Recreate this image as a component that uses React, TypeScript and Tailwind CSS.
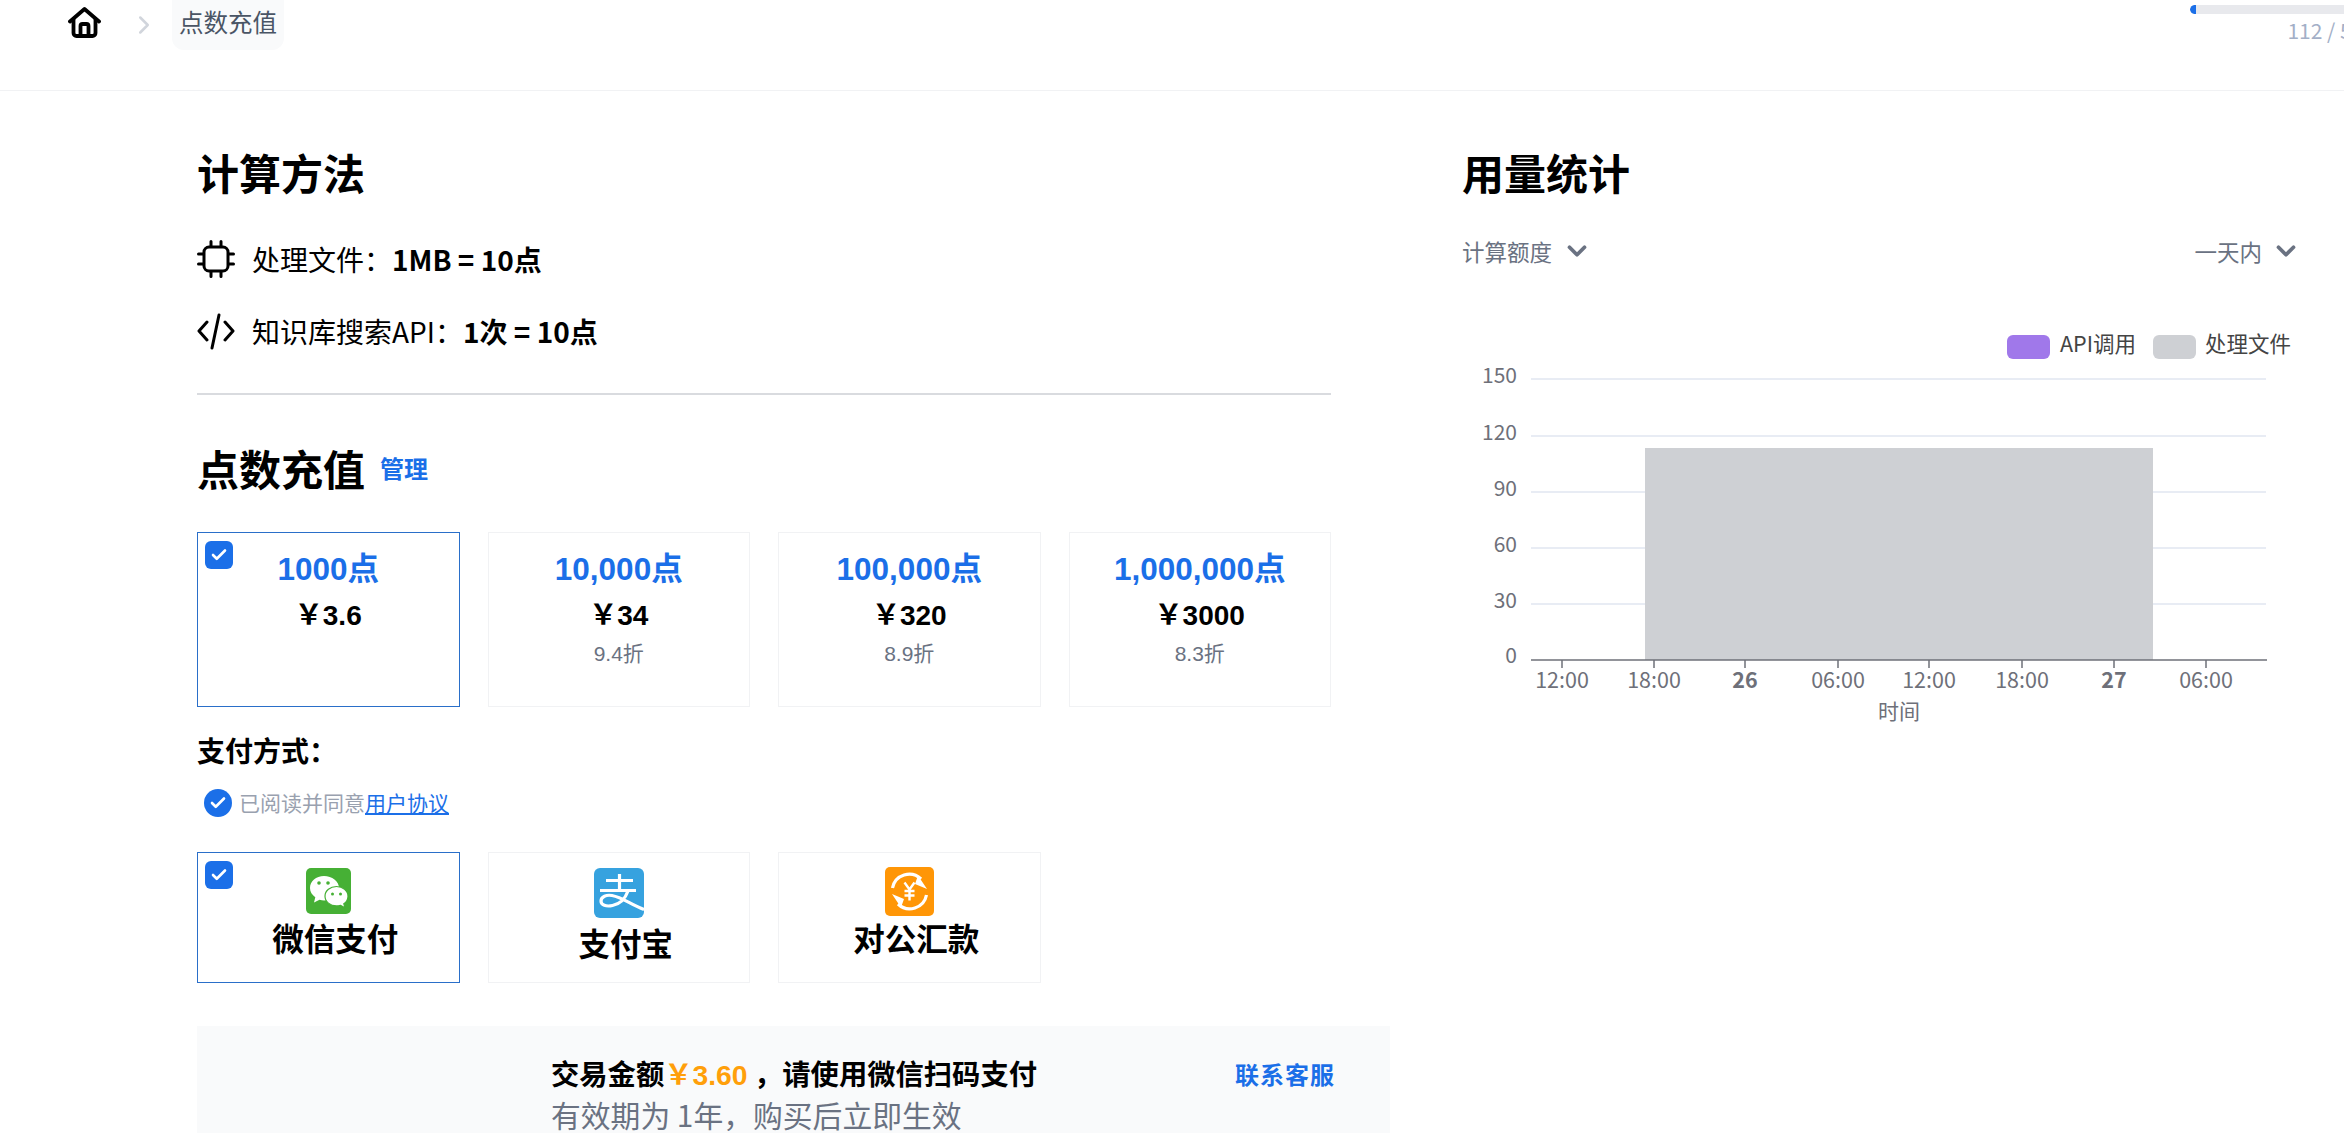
import { ChevronDown, ChevronRight, Check } from "lucide-react";

const cjk = "font-['Noto_Sans_CJK_SC','Noto_Sans',sans-serif]";
const arial = "font-['Liberation_Sans','Noto_Sans_CJK_SC',sans-serif]";

function HomeIcon() {
  return (
    <svg viewBox="0 0 33 31" className="h-[31px] w-[33px] text-black" fill="none" stroke="currentColor" strokeWidth="3.800" strokeLinejoin="round" strokeLinecap="round">
      <path d="M2 14.500 16.500 2 31 14.500" />
      <path d="M5.500 12v14a3 3 0 0 0 3 3h16a3 3 0 0 0 3-3V12" />
      <path d="M12.500 29V19a2 2 0 0 1 2-2h4a2 2 0 0 1 2 2v10" />
    </svg>
  );
}

function ChipIcon() {
  return (
    <svg viewBox="0 0 38 38" className="h-[38px] w-[38px] shrink-0 text-black" fill="none" stroke="currentColor" strokeWidth="3" strokeLinecap="round">
      <rect x="7" y="7" width="24" height="24" rx="5" />
      <path d="M14 1.500V6M24 1.500V6M14 32v4.500M24 32v4.500M1.500 14H6M1.500 24H6M32 14h4.500M32 24h4.500" />
    </svg>
  );
}

function CodeIcon() {
  return (
    <svg viewBox="0 0 38 38" className="h-[38px] w-[38px] shrink-0 text-black" fill="none" stroke="currentColor" strokeWidth="3" strokeLinecap="round" strokeLinejoin="round">
      <path d="M10 10 2 19l8 9" />
      <path d="M22 3 15 36" />
      <path d="M28 10l8 9-8 9" />
    </svg>
  );
}

function WechatLogo() {
  return (
    <svg viewBox="0 0 45 46" className="h-[46px] w-[45px]">
      <rect width="45" height="46" rx="5" fill="#46b035" />
      <path d="M18 8C10 8 4 13.300 4 20c0 3.800 2 7 5.300 9.200L8 34.500l5.500-2.800c1.600.5 3 .7 4.500.7 8 0 15-5.800 15-12.400C33 13.300 26 8 18 8Z" fill="#fff" />
      <path d="M30.500 18.500c-6.300 0-11.500 4.200-11.500 9.700s5.200 9.700 11.500 9.700c1.400 0 2.700-.2 4-.6l4.500 2.500-1.200-4c2.700-1.800 4.200-4.500 4.200-7.600 0-5.500-5.200-9.700-11.500-9.700Z" fill="#fff" stroke="#46b035" strokeWidth="1.200" />
      <circle cx="13" cy="15" r="1.800" fill="#46b035" />
      <circle cx="22" cy="15" r="1.800" fill="#46b035" />
      <circle cx="26.500" cy="26" r="1.500" fill="#46b035" />
      <circle cx="34.500" cy="26" r="1.500" fill="#46b035" />
    </svg>
  );
}

function AlipayLogo() {
  return (
    <svg viewBox="0 0 50 50" className="h-[50px] w-[50px]">
      <path d="M6 0h38a6 6 0 0 1 6 6v38a6 6 0 0 1-6 6H6a6 6 0 0 1-6-6V6a6 6 0 0 1 6-6Z" fill="#36a2df" />
      <path d="M12 12.500h27M25.500 6v16M6 22.500h36" stroke="#fff" strokeWidth="3.200" fill="none" />
      <path d="M34 23c-2.500 7-8 13-15.500 14.500C12 39 7 37 7 33c0-4.500 5.500-6.500 11-5.500 11 2 19 9.500 32 14" stroke="#fff" strokeWidth="3.200" fill="none" />
    </svg>
  );
}

function BankLogo() {
  return (
    <svg viewBox="0 0 49 49" className="h-[49px] w-[49px]">
      <rect width="49" height="49" rx="5" fill="#ff9606" />
      <path d="M7.500 21A17 17 0 0 1 36 12" stroke="#fff" strokeWidth="3.200" fill="none" />
      <path d="M41.500 28A17 17 0 0 1 13 37" stroke="#fff" strokeWidth="3.200" fill="none" />
      <path d="M33 8.500 42 22l-12-5ZM16 40.500 7 27l12 5Z" fill="#fff" />
      <path d="M19.500 15.500l5 7 5-7M24.500 22.500v11M19.500 24h10M19.500 28.500h10" stroke="#fff" strokeWidth="2.400" fill="none" />
    </svg>
  );
}

function CheckBadge({ round }: { round?: boolean }) {
  return (
    <span className={`flex h-7 w-7 shrink-0 items-center justify-center bg-[#1b6fe8] text-white ${round ? "rounded-full" : "rounded-md"}`}>
      <Check className="h-[18px] w-[18px]" strokeWidth={3.5} />
    </span>
  );
}

function UsageChart() {
  const grid = [
    { y: 379, label: "150" },
    { y: 436, label: "120" },
    { y: 492, label: "90" },
    { y: 548, label: "60" },
    { y: 604, label: "30" },
  ];
  const ticks = [
    { x: 1562, label: "12:00" },
    { x: 1654, label: "18:00" },
    { x: 1745, label: "26", bold: true },
    { x: 1838, label: "06:00" },
    { x: 1929, label: "12:00" },
    { x: 2022, label: "18:00" },
    { x: 2114, label: "27", bold: true },
    { x: 2206, label: "06:00" },
  ];
  return (
    <svg viewBox="1462 320 860 410" className="mt-[52px] h-[410px] w-[860px] max-w-none font-['Noto_Sans_CJK_SC',sans-serif]">
      <rect x="2007" y="335" width="43" height="24" rx="6" fill="#a078ea" />
      <text x="2060" y="352" fontSize="21.500" fill="#444">API调用</text>
      <rect x="2153" y="335" width="43" height="24" rx="6" fill="#ced0d4" />
      <text x="2205" y="352" fontSize="21.500" fill="#444">处理文件</text>
      {grid.map((g) => (
        <g key={g.label}>
          <line x1="1531" x2="2266" y1={g.y} y2={g.y} stroke="#e0e6f1" strokeWidth="1.5" />
          <text x="1517" y={g.y + 4} fontSize="21" textAnchor="end" fill="#6e7079">{g.label}</text>
        </g>
      ))}
      <text x="1517" y="663" fontSize="21" textAnchor="end" fill="#6e7079">0</text>
      <rect x="1645" y="448" width="508" height="212" fill="#ced0d4" />
      <line x1="1531" x2="2267" y1="660" y2="660" stroke="#6e7079" strokeWidth="1.5" />
      {ticks.map((t) => (
        <g key={t.x}>
          <line x1={t.x} x2={t.x} y1="660" y2="668" stroke="#6e7079" strokeWidth="1.5" />
          <text x={t.x} y="688" fontSize="21.500" textAnchor="middle" fill="#6e7079" fontWeight={t.bold ? 700 : 400}>{t.label}</text>
        </g>
      ))}
      <text x="1899" y="719" fontSize="21" textAnchor="middle" fill="#6e7079">时间</text>
    </svg>
  );
}

const plans = [
  { points: "1000点", price: "￥3.6", off: "" },
  { points: "10,000点", price: "￥34", off: "9.4折" },
  { points: "100,000点", price: "￥320", off: "8.9折" },
  { points: "1,000,000点", price: "￥3000", off: "8.3折" },
];

export default function App() {
  return (
    <div className={`h-screen overflow-hidden bg-white ${cjk}`}>
      {/* Header */}
      <div className="flex h-[91px] items-start border-b border-[#f1f2f4] pl-[68px]">
        <div className="mt-[7px]"><HomeIcon /></div>
        <ChevronRight className="ml-[28px] mt-[10px] h-[30px] w-[30px] text-gray-300" strokeWidth={2} />
        <div className="ml-[13px] flex h-[50px] items-center rounded-b-xl bg-[#f9fafb] px-[7px] pb-[5px] text-[24.5px] text-gray-600">点数充值</div>
        <div className="ml-auto -mr-[31px] mt-[5px] w-[185px]">
          <div className="h-[9px] overflow-hidden rounded-full bg-[#e8e9ed]">
            <div className="h-full w-[6px] rounded-l-full bg-[#1b6fe8]" />
          </div>
          <div className="mt-[1px] text-right text-[21px] leading-[30px] text-[#a3afc7]">112 / 500</div>
        </div>
      </div>

      <div className="flex pl-[197px]">
        {/* Left column */}
        <div className="w-[1193px] shrink-0">
          <h2 className="mt-[55px] text-[42px] font-bold leading-[52px] text-black">计算方法</h2>
          <div className="mt-[42px] flex h-[38px] items-center text-[28px] text-black">
            <ChipIcon />
            <span className="ml-[17px]">处理文件：<b>1MB = 10点</b></span>
          </div>
          <div className="mt-[34px] flex h-[38px] items-center text-[28px] text-black">
            <CodeIcon />
            <span className="ml-[17px]">知识库搜索API：<b>1次 = 10点</b></span>
          </div>
          <div className="mt-[43px] w-[1134px] border-t-2 border-[#d9dbdf]" />

          <div className="mt-[47px] flex items-center">
            <h2 className="text-[42px] font-bold leading-[52px] text-black">点数充值</h2>
            <a className="ml-[15px] text-[24px] font-bold text-[#1b6fe8]">管理</a>
          </div>

          <div className={`mt-[38px] grid w-[1134px] grid-cols-4 gap-[28px] ${arial}`}>
            {plans.map((p, i) => (
              <div key={p.points} className={`relative flex h-[175px] flex-col items-center border pt-[16px] ${i === 0 ? "border-[#2a6fc9]" : "border-[#f1f2f4]"}`}>
                {i === 0 && <div className="absolute left-[7px] top-[8px]"><CheckBadge /></div>}
                <div className="text-[31.5px] font-bold leading-[40px] text-[#1b6fe8]">{p.points}</div>
                <div className="mt-[7px] text-[28px] font-bold leading-[40px] text-black">{p.price}</div>
                {p.off && <div className="mt-[2px] text-[21px] leading-[32px] text-gray-500">{p.off}</div>}
              </div>
            ))}
          </div>

          <div className="mt-[26px] text-[28px] font-bold leading-[34px] text-black">支付方式：</div>
          <div className="mt-[22px] flex h-7 items-center pl-[7px] text-[21px] text-gray-400">
            <CheckBadge round />
            <span className="ml-[7px]">已阅读并同意<a className="text-[#1b6fe8] underline">用户协议</a></span>
          </div>

          <div className="mt-[35px] grid w-[1134px] grid-cols-4 gap-[28px]">
            <div className="relative flex h-[131px] flex-col items-center border border-[#2a6fc9] pt-[15px]">
              <div className="absolute left-[7px] top-[8px]"><CheckBadge /></div>
              <WechatLogo />
              <div className="ml-[14px] mt-[1px] text-[31.5px] font-bold leading-[44px] text-black">微信支付</div>
            </div>
            <div className="flex h-[131px] flex-col items-center border border-[#f1f2f4] pt-[15px]">
              <AlipayLogo />
              <div className="ml-[14px] mt-[2px] text-[31.5px] font-bold leading-[44px] text-black">支付宝</div>
            </div>
            <div className="flex h-[131px] flex-col items-center border border-[#f1f2f4] pt-[14px]">
              <BankLogo />
              <div className="ml-[14px] -mt-[1px] text-[31.5px] font-bold leading-[44px] text-black">对公汇款</div>
            </div>
          </div>

          <div className="mt-[43px] flex h-[200px] w-[1193px] items-start bg-[#f9fafb] pl-[354px] pr-[55px] pt-[27px]">
            <div className="flex-1">
              <div className="text-[28.3px] font-bold leading-[40px] text-black">
                交易金额<span className={`text-[#ff9f0a] ${arial}`}>￥3.60</span> ，请使用微信扫码支付
              </div>
              <div className="text-[29.8px] leading-[38px] text-gray-500">有效期为 1年，购买后立即生效</div>
            </div>
            <a className="mt-[1px] text-[24px] font-bold leading-[40px] tracking-[1px] text-[#1b6fe8]">联系客服</a>
          </div>
        </div>

        {/* Right column */}
        <div className="ml-[72px] w-[839px] shrink-0">
          <h2 className="mt-[55px] text-[42px] font-bold leading-[52px] text-black">用量统计</h2>
          <div className="mt-[36px] flex h-[34px] items-center justify-between text-[22.5px] leading-[34px] text-gray-500">
            <div className="flex items-center">计算额度<ChevronDown className="ml-[10px] h-[30px] w-[30px] text-gray-500" strokeWidth={3} /></div>
            <div className="flex items-center">一天内<ChevronDown className="ml-[9px] h-[30px] w-[30px] text-gray-500" strokeWidth={3} /></div>
          </div>
          <UsageChart />
        </div>
      </div>
    </div>
  );
}
